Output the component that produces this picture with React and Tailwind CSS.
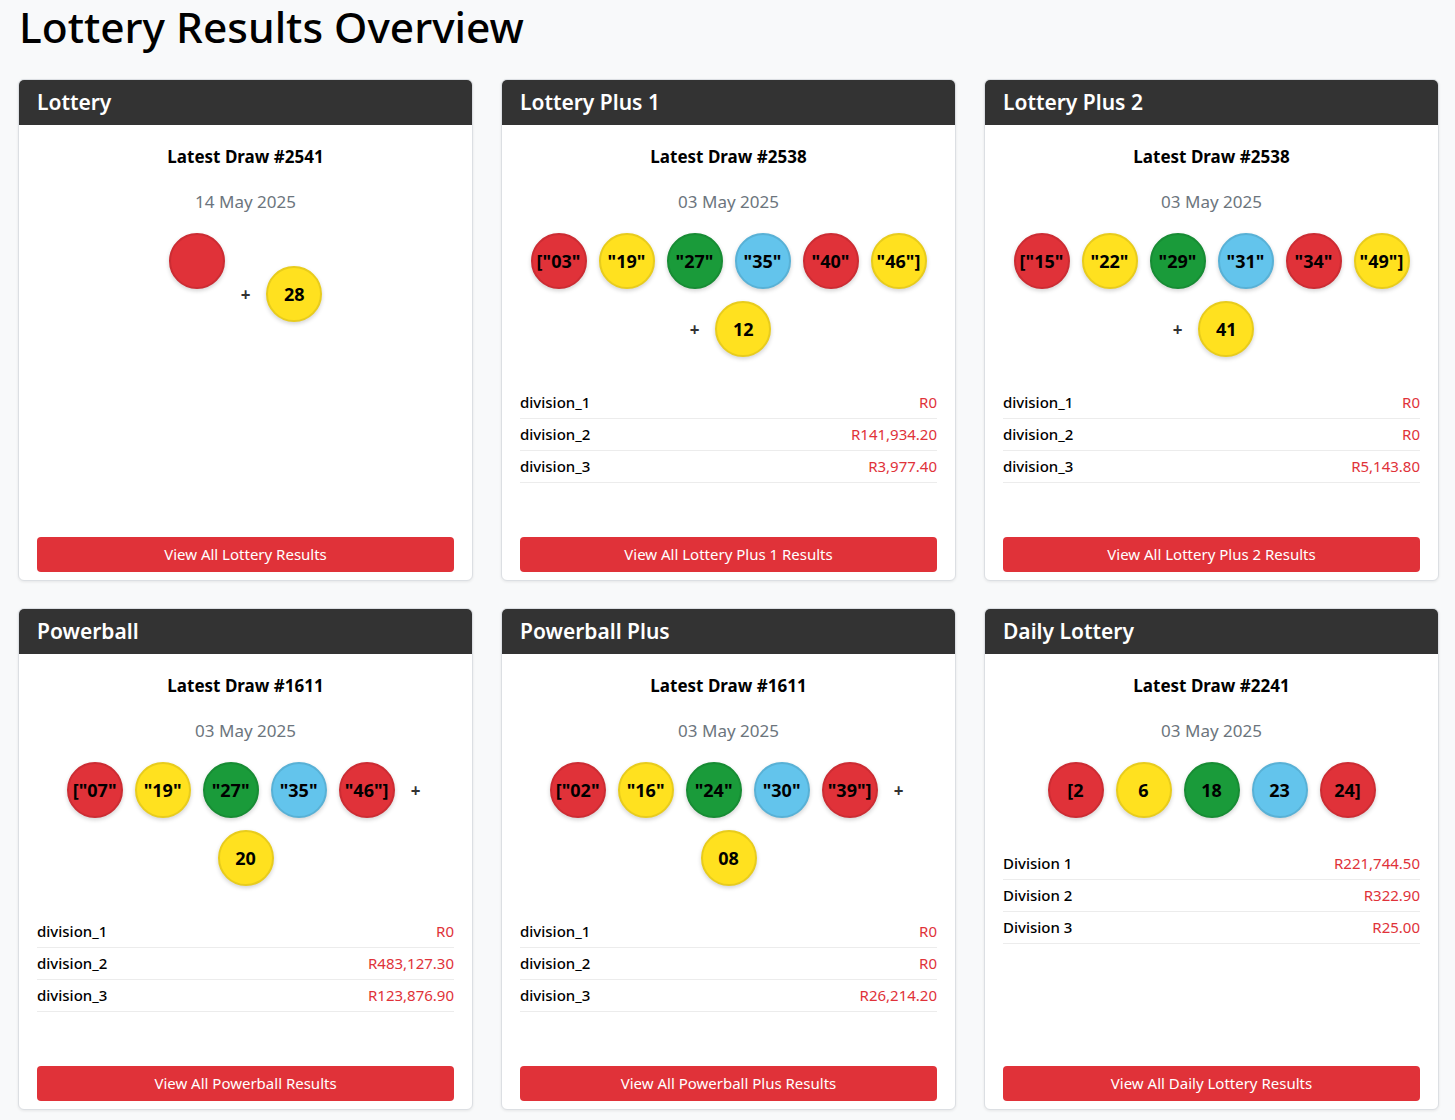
import React from "react";

const COLORS = [
  "bg-[#e03239] border-[#cc2c33]",
  "bg-[#ffe11f] border-[#e8cc1c]",
  "bg-[#1a9b3a] border-[#178c34]",
  "bg-[#63c4ec] border-[#58b1d6]",
];

const cards = [
  {
    name: "Lottery",
    draw: "2541",
    date: "14 May 2025",
    balls: [""],
    bonus: "28",
    divisions: [],
    button: "View All Lottery Results",
  },
  {
    name: "Lottery Plus 1",
    draw: "2538",
    date: "03 May 2025",
    balls: ['["03"', '"19"', '"27"', '"35"', '"40"', '"46"]'],
    bonus: "12",
    divisions: [
      ["division_1", "R0"],
      ["division_2", "R141,934.20"],
      ["division_3", "R3,977.40"],
    ],
    button: "View All Lottery Plus 1 Results",
  },
  {
    name: "Lottery Plus 2",
    draw: "2538",
    date: "03 May 2025",
    balls: ['["15"', '"22"', '"29"', '"31"', '"34"', '"49"]'],
    bonus: "41",
    divisions: [
      ["division_1", "R0"],
      ["division_2", "R0"],
      ["division_3", "R5,143.80"],
    ],
    button: "View All Lottery Plus 2 Results",
  },
  {
    name: "Powerball",
    draw: "1611",
    date: "03 May 2025",
    balls: ['["07"', '"19"', '"27"', '"35"', '"46"]'],
    bonus: "20",
    divisions: [
      ["division_1", "R0"],
      ["division_2", "R483,127.30"],
      ["division_3", "R123,876.90"],
    ],
    button: "View All Powerball Results",
  },
  {
    name: "Powerball Plus",
    draw: "1611",
    date: "03 May 2025",
    balls: ['["02"', '"16"', '"24"', '"30"', '"39"]'],
    bonus: "08",
    divisions: [
      ["division_1", "R0"],
      ["division_2", "R0"],
      ["division_3", "R26,214.20"],
    ],
    button: "View All Powerball Plus Results",
  },
  {
    name: "Daily Lottery",
    draw: "2241",
    date: "03 May 2025",
    balls: ["[2", "6", "18", "23", "24]"],
    bonus: null,
    divisions: [
      ["Division 1", "R221,744.50"],
      ["Division 2", "R322.90"],
      ["Division 3", "R25.00"],
    ],
    button: "View All Daily Lottery Results",
  },
];

function Ball({ value, color }) {
  const empty = value === "";
  return (
    <span
      className={`inline-block w-[56px] h-[56px] mx-[6px] mt-[6px] ${empty ? "mb-[12px]" : "mb-[6px]"} rounded-full border-2 text-center leading-[52px] text-[18px] font-bold text-black align-baseline shadow-[0_2px_4px_rgba(0,0,0,0.18)] ${color}`}
    >
      {value}
    </span>
  );
}

function Card({ card }) {
  return (
    <div className="flex flex-col bg-white border border-[#dcdfe3] rounded-[6px] overflow-hidden shadow-[0_1px_3px_rgba(0,0,0,0.08)]">
      <div className="h-[45px] bg-[#333333] px-[18px] flex items-center">
        <h2 className="text-white text-[21px] font-semibold leading-none">{card.name}</h2>
      </div>
      <div className="flex flex-col flex-1 px-[18px] pt-[18px] pb-[8px]">
        <div className="text-center text-[17px] font-bold leading-[28px] text-black">
          Latest Draw #{card.draw}
        </div>
        <div className="text-center text-[17px] leading-[28px] text-[#6c757d] mt-[17px]">
          {card.date}
        </div>
        <div className="text-center leading-none mt-[11px]">
          {card.balls.map((b, i) => (
            <Ball key={i} value={b} color={COLORS[i % 4]} />
          ))}
          {card.bonus && (
            <>
              <span className="inline-block mx-[10px] text-[17px] font-bold text-[#333]">+</span>
              <Ball value={card.bonus} color={COLORS[1]} />
            </>
          )}
        </div>
        {card.divisions.length > 0 && (
          <div className="mt-[24px] mb-[54px]">
            {card.divisions.map(([label, val]) => (
              <div
                key={label}
                className="h-[32px] flex items-center justify-between border-b border-[#ececec] text-[15px]"
              >
                <span className="font-medium text-black">{label}</span>
                <span className="text-[#e03239]">{val}</span>
              </div>
            ))}
          </div>
        )}
        <button className="mt-auto h-[35px] w-full rounded-[4px] bg-[#e03239] text-white text-[15px] flex items-center justify-center">
          {card.button}
        </button>
      </div>
    </div>
  );
}

export default function App() {
  return (
    <div
      className="min-h-[1120px] bg-[#f8f9fa] pl-[18px] pr-[16px] pb-[10px]"
      style={{ fontFamily: '"Noto Sans", "Open Sans", sans-serif' }}
    >
      <h1 className="text-[42.5px] leading-[54px] font-medium text-black mb-[25px] pl-[1px]">
        Lottery Results Overview
      </h1>
      <div className="grid grid-cols-3 gap-x-[28px] gap-y-[27px]">
        {cards.map((c) => (
          <Card key={c.name} card={c} />
        ))}
      </div>
    </div>
  );
}
